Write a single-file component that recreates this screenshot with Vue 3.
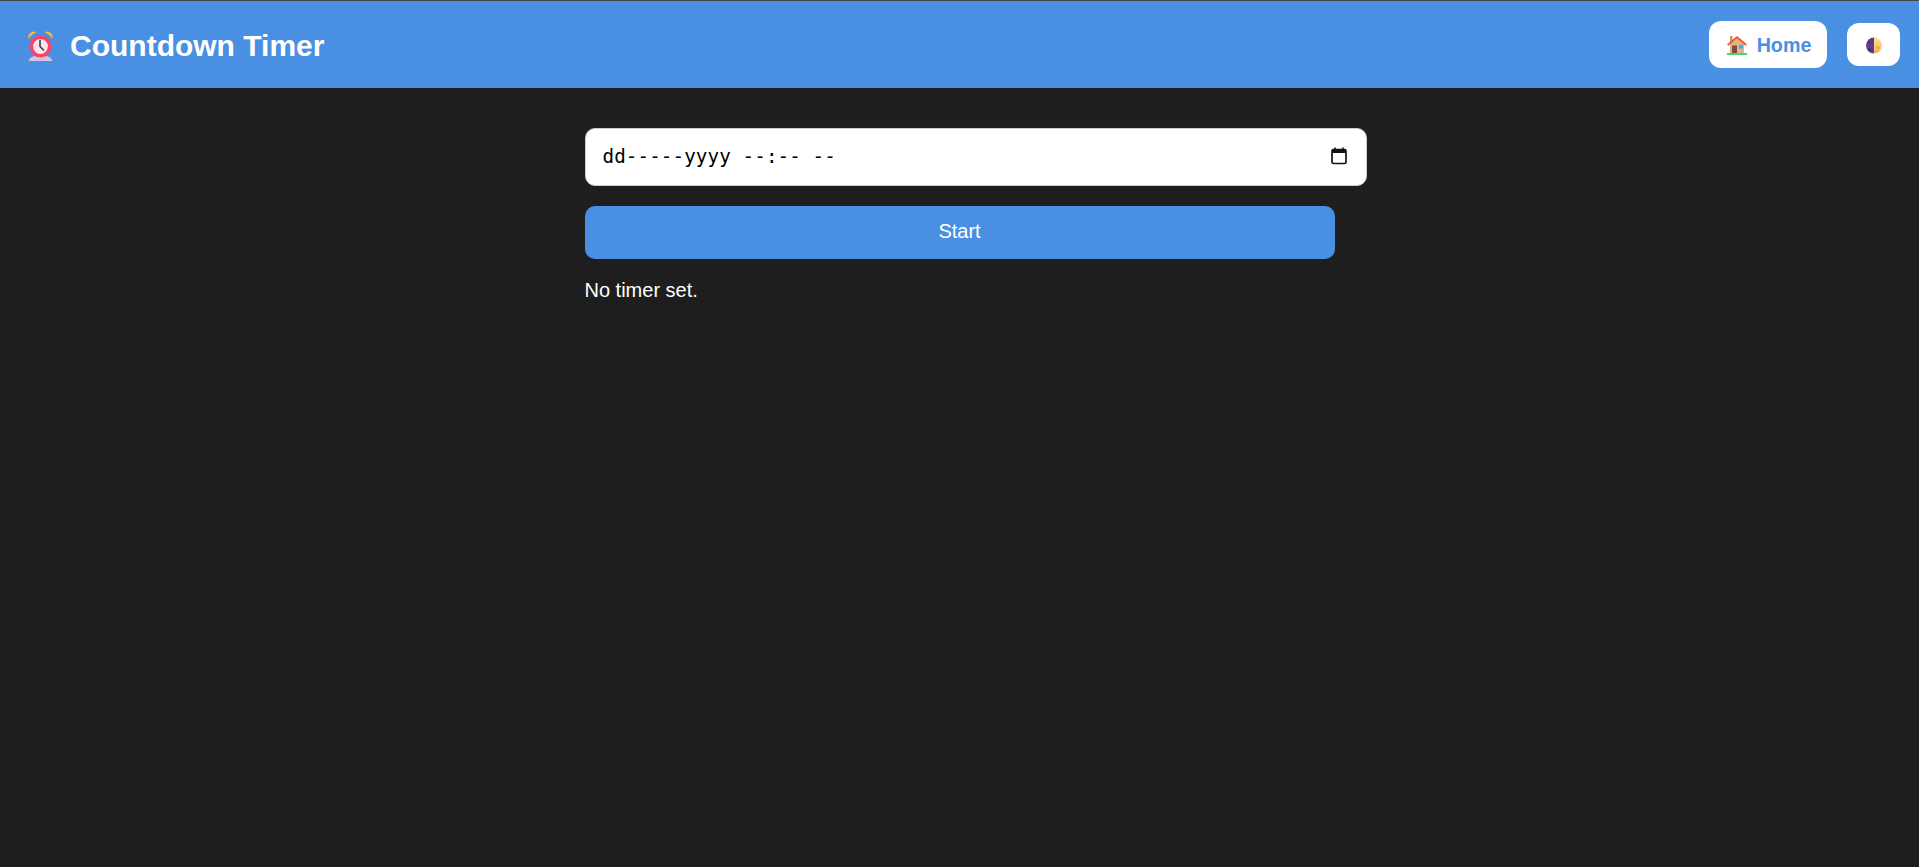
<script setup>
const placeholder = 'dd-----yyyy --:-- --'
</script>

<template>
  <div class="page">
    <header class="bar">
      <h1 class="title">
        <svg class="emoji clock" viewBox="0 0 27 30" aria-hidden="true">
          <defs>
            <linearGradient id="bell" x1="0" y1="0" x2="0" y2="1">
              <stop offset="0" stop-color="#fdc53f" />
              <stop offset="1" stop-color="#e89a2c" />
            </linearGradient>
          </defs>
          <path d="M1.500 8C0 3.500 4 -0.500 9.500 1C6.500 2.500 4 4.500 1.500 8Z" fill="url(#bell)" />
          <path d="M25.500 8C27 3.500 23 -0.500 17.500 1C20.500 2.500 23 4.500 25.500 8Z" fill="url(#bell)" />
          <path d="M8 25H19C22 25.500 24.500 27 25.500 30H1.500C2.500 27 5 25.500 8 25Z" fill="#d6c2e6" />
          <circle cx="13.500" cy="15.500" r="9.200" fill="#fbe6ee" stroke="#f5456f" stroke-width="3.600" />
          <path d="M13 9.500V15.500L16.500 19" fill="none" stroke="#5c3a46" stroke-width="1.700" stroke-linecap="round" />
        </svg>
        <span class="title-text">Countdown Timer</span>
      </h1>
      <nav class="actions">
        <a class="home" href="#">
          <svg class="emoji house" viewBox="0 0 20 19" aria-hidden="true">
            <rect x="3" y="0" width="2.500" height="8" fill="#c9936a" />
            <path d="M3 8L10 2L17 8V17H3Z" fill="#e2b48c" />
            <rect x="5" y="9.500" width="5" height="7.500" fill="#7a4f3f" />
            <rect x="12" y="9" width="4" height="3.500" fill="#35b3f0" />
            <path d="M0.700 9L10 1.300L19.300 9" fill="none" stroke="#ee5a32" stroke-width="2" />
            <rect x="0" y="17" width="20" height="2" fill="#4fd07c" />
          </svg>
          <span>Home</span>
        </a>
        <button class="toggle" type="button" aria-label="Toggle theme">
          <svg class="emoji moon" viewBox="0 0 16 17" aria-hidden="true">
            <defs>
              <linearGradient id="moonlight" x1="0" y1="0" x2="0" y2="1">
                <stop offset="0" stop-color="#ffe08a" />
                <stop offset="1" stop-color="#f3b95f" />
              </linearGradient>
            </defs>
            <path d="M8 0.500A8 8 0 0 1 8 16.500Z" fill="url(#moonlight)" />
            <path d="M8 0.500A8 8 0 0 0 8 16.500Z" fill="#5e3d86" />
            <circle cx="12" cy="10.500" r="1.500" fill="#e6a94f" />
            <circle cx="10" cy="14" r="1" fill="#e6a94f" />
            <circle cx="4" cy="12.500" r="1.200" fill="#3f2b5c" />
            <circle cx="3.500" cy="5" r="1" fill="#3f2b5c" />
          </svg>
        </button>
      </nav>
    </header>

    <main class="content">
      <div class="field">
        <input class="date" type="text" readonly :value="placeholder" aria-label="Target date" />
        <svg class="cal" viewBox="0 0 16 18" aria-hidden="true">
          <path d="M4 0.500V3M12 0.500V3" stroke="#111" stroke-width="1.600" />
          <rect x="1" y="2.500" width="14" height="14" rx="1.500" fill="none" stroke="#111" stroke-width="1.700" />
          <rect x="1" y="2.500" width="14" height="3.500" fill="#111" />
        </svg>
      </div>
      <button class="start" type="button">Start</button>
      <p class="status">No timer set.</p>
    </main>
  </div>
</template>

<style>
html,
body {
  margin: 0;
  background: #1e1e1e;
}
</style>

<style scoped>
.page {
  min-height: 100vh;
  background: #1e1e1e;
  color: #fff;
  font-family: "Liberation Sans", Arial, sans-serif;
}
.bar {
  box-sizing: border-box;
  height: 88px;
  border-top: 1px solid #444;
  background: #4a90e2;
  padding: 0 19px 0 27px;
  display: flex;
  align-items: center;
  justify-content: space-between;
}
.title {
  margin: 0;
  padding-top: 2px;
  display: flex;
  align-items: center;
  gap: 16px;
  font-size: 30px;
  font-weight: 700;
}
.emoji {
  display: block;
  flex: none;
}
.clock {
  width: 27px;
  height: 30px;
}
.actions {
  display: flex;
  align-items: center;
  gap: 20px;
}
.home {
  box-sizing: border-box;
  width: 118px;
  height: 47px;
  padding: 1px 0 0 2px;
  border-radius: 12px;
  background: #fff;
  color: #4a90e2;
  font-size: 19.700px;
  font-weight: 700;
  text-decoration: none;
  display: flex;
  align-items: center;
  justify-content: center;
  gap: 10px;
}
.house {
  width: 20px;
  height: 19px;
}
.toggle {
  box-sizing: border-box;
  width: 53px;
  height: 43px;
  border: 0;
  border-radius: 12px;
  background: #fff;
  padding: 2px 0 0;
  display: flex;
  align-items: center;
  justify-content: center;
}
.moon {
  width: 16px;
  height: 17px;
}
.content {
  box-sizing: border-box;
  width: 750px;
  margin: 0 auto;
  padding-top: 40px;
}
.field {
  position: relative;
  width: 782px;
  margin-bottom: 20px;
}
.date {
  display: block;
  box-sizing: border-box;
  width: 100%;
  height: 58px;
  padding: 0 17px 2px;
  border: 1px solid #ccc;
  border-radius: 10px;
  background: #fff;
  color: #000;
  font-family: "DejaVu Sans Mono", monospace;
  font-size: 19.200px;
  letter-spacing: 0.120px;
  outline: none;
}
.cal {
  position: absolute;
  right: 20px;
  top: 19px;
  width: 16px;
  height: 18px;
}
.start {
  display: block;
  width: 100%;
  height: 53px;
  padding: 0 0 2px;
  border: 0;
  border-radius: 10px;
  background: #4a90e2;
  color: #fff;
  font-family: inherit;
  font-size: 20px;
}
.status {
  margin: 20px 0 0;
  font-size: 20px;
  line-height: 22px;
}
</style>
